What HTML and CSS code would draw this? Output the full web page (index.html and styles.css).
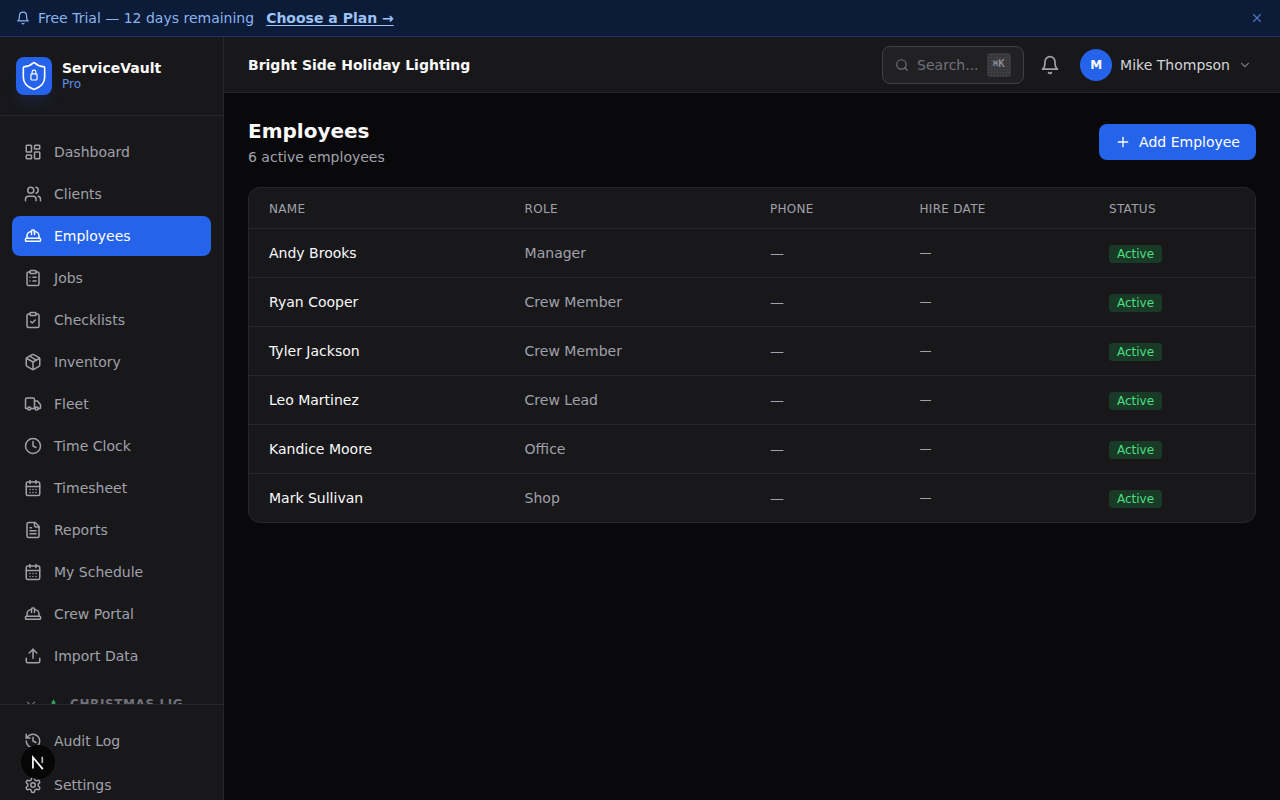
FILE: index.html
```html
<!DOCTYPE html>
<html lang="en">
<head>
<meta charset="utf-8">
<title>Employees</title>
<link rel="stylesheet" href="styles.css">
</head>
<body>
<svg class="defs" width="0" height="0" aria-hidden="true">
  <defs>
    <symbol id="i-dashboard" viewBox="0 0 24 24"><rect x="3" y="3" width="7" height="9" rx="1"/><rect x="14" y="3" width="7" height="5" rx="1"/><rect x="14" y="12" width="7" height="9" rx="1"/><rect x="3" y="16" width="7" height="5" rx="1"/></symbol>
    <symbol id="i-users" viewBox="0 0 24 24"><path d="M16 21v-2a4 4 0 0 0-4-4H6a4 4 0 0 0-4 4v2"/><circle cx="9" cy="7" r="4"/><path d="M22 21v-2a4 4 0 0 0-3-3.87"/><path d="M16 3.13a4 4 0 0 1 0 7.75"/></symbol>
    <symbol id="i-hat" viewBox="0 0 24 24"><path d="M2 18a1 1 0 0 0 1 1h18a1 1 0 0 0 1-1v-2a1 1 0 0 0-1-1H3a1 1 0 0 0-1 1v2z"/><path d="M10 10V5a1 1 0 0 1 1-1h2a1 1 0 0 1 1 1v5"/><path d="M4 15v-3a6 6 0 0 1 6-6"/><path d="M14 6a6 6 0 0 1 6 6v3"/></symbol>
    <symbol id="i-clip-list" viewBox="0 0 24 24"><rect x="8" y="2" width="8" height="4" rx="1"/><path d="M16 4h2a2 2 0 0 1 2 2v14a2 2 0 0 1-2 2H6a2 2 0 0 1-2-2V6a2 2 0 0 1 2-2h2"/><path d="M12 11h4"/><path d="M12 16h4"/><path d="M8 11h.01"/><path d="M8 16h.01"/></symbol>
    <symbol id="i-clip-check" viewBox="0 0 24 24"><rect x="8" y="2" width="8" height="4" rx="1"/><path d="M16 4h2a2 2 0 0 1 2 2v14a2 2 0 0 1-2 2H6a2 2 0 0 1-2-2V6a2 2 0 0 1 2-2h2"/><path d="m9 14 2 2 4-4"/></symbol>
    <symbol id="i-package" viewBox="0 0 24 24"><path d="M11 21.73a2 2 0 0 0 2 0l7-4A2 2 0 0 0 21 16V8a2 2 0 0 0-1-1.73l-7-4a2 2 0 0 0-2 0l-7 4A2 2 0 0 0 3 8v8a2 2 0 0 0 1 1.73z"/><path d="M12 22V12"/><path d="M3.3 7 12 12l8.7-5"/><path d="m7.5 4.27 9 5.15"/></symbol>
    <symbol id="i-truck" viewBox="0 0 24 24"><path d="M14 18V6a2 2 0 0 0-2-2H4a2 2 0 0 0-2 2v11a1 1 0 0 0 1 1h2"/><path d="M15 18H9"/><path d="M19 18h2a1 1 0 0 0 1-1v-3.65a1 1 0 0 0-.22-.624l-3.48-4.35A1 1 0 0 0 17.52 8H14"/><circle cx="17" cy="18" r="2"/><circle cx="7" cy="18" r="2"/></symbol>
    <symbol id="i-clock" viewBox="0 0 24 24"><circle cx="12" cy="12" r="10"/><polyline points="12 6 12 12 16 14"/></symbol>
    <symbol id="i-calendar" viewBox="0 0 24 24"><path d="M8 2v4"/><path d="M16 2v4"/><rect x="3" y="4" width="18" height="18" rx="2"/><path d="M3 10h18"/><path d="M8 14h.01"/><path d="M12 14h.01"/><path d="M16 14h.01"/><path d="M8 18h.01"/><path d="M12 18h.01"/><path d="M16 18h.01"/></symbol>
    <symbol id="i-file" viewBox="0 0 24 24"><path d="M15 2H6a2 2 0 0 0-2 2v16a2 2 0 0 0 2 2h12a2 2 0 0 0 2-2V7Z"/><path d="M14 2v4a2 2 0 0 0 2 2h4"/><path d="M10 9H8"/><path d="M16 13H8"/><path d="M16 17H8"/></symbol>
    <symbol id="i-upload" viewBox="0 0 24 24"><path d="M21 15v4a2 2 0 0 1-2 2H5a2 2 0 0 1-2-2v-4"/><polyline points="17 8 12 3 7 8"/><line x1="12" y1="3" x2="12" y2="15"/></symbol>
    <symbol id="i-history" viewBox="0 0 24 24"><path d="M3 12a9 9 0 1 0 9-9 9.75 9.75 0 0 0-6.74 2.74L3 8"/><path d="M3 3v5h5"/><path d="M12 7v5l4 2"/></symbol>
    <symbol id="i-settings" viewBox="0 0 24 24"><path d="M12.22 2h-.44a2 2 0 0 0-2 2v.18a2 2 0 0 1-1 1.73l-.43.25a2 2 0 0 1-2 0l-.15-.08a2 2 0 0 0-2.73.73l-.22.38a2 2 0 0 0 .73 2.73l.15.1a2 2 0 0 1 1 1.72v.51a2 2 0 0 1-1 1.74l-.15.09a2 2 0 0 0-.73 2.73l.22.38a2 2 0 0 0 2.73.73l.15-.08a2 2 0 0 1 2 0l.43.25a2 2 0 0 1 1 1.73V20a2 2 0 0 0 2 2h.44a2 2 0 0 0 2-2v-.18a2 2 0 0 1 1-1.73l.43-.25a2 2 0 0 1 2 0l.15.08a2 2 0 0 0 2.73-.73l.22-.39a2 2 0 0 0-.73-2.73l-.15-.08a2 2 0 0 1-1-1.74v-.5a2 2 0 0 1 1-1.74l.15-.09a2 2 0 0 0 .73-2.73l-.22-.38a2 2 0 0 0-2.73-.73l-.15.08a2 2 0 0 1-2 0l-.43-.25a2 2 0 0 1-1-1.73V4a2 2 0 0 0-2-2z"/><circle cx="12" cy="12" r="3"/></symbol>
    <symbol id="i-bell" viewBox="0 0 24 24"><path d="M6 8a6 6 0 0 1 12 0c0 7 3 9 3 9H3s3-2 3-9"/><path d="M10.3 21a1.94 1.94 0 0 0 3.4 0"/></symbol>
    <symbol id="i-chevron" viewBox="0 0 24 24"><path d="m6 9 6 6 6-6"/></symbol>
    <symbol id="i-search" viewBox="0 0 24 24"><circle cx="11" cy="11" r="8"/><path d="m21 21-4.300-4.300"/></symbol>
  </defs>
</svg>

<div class="banner">
  <div class="banner-left">
    <svg class="ic ic-14"><use href="#i-bell"/></svg>
    <span class="banner-text">Free Trial — 12 days remaining</span>
    <a class="banner-link" href="#">Choose a Plan →</a>
  </div>
  <svg class="ic ic-14 banner-close" viewBox="0 0 24 24"><path d="M18 6 6 18"/><path d="m6 6 12 12"/></svg>
</div>

<div class="app">
  <aside class="sidebar">
    <div class="brand">
      <div class="logo">
        <svg class="logo-svg" viewBox="0 0 24 24"><path d="M20 13c0 5-3.500 7.500-7.660 8.950a1 1 0 0 1-.67-.01C7.500 20.500 4 18 4 13V6a1 1 0 0 1 1-1c2 0 4.500-1.200 6.240-2.720a1.170 1.170 0 0 1 1.520 0C14.510 3.810 17 5 19 5a1 1 0 0 1 1 1z"/><rect class="logo-lock" x="9.700" y="10.400" width="4.600" height="4.600" rx=".7"/><path class="logo-lock" d="M10.600 10.400V9a1.400 1.400 0 0 1 2.800 0v1.400"/></svg>
      </div>
      <div class="brand-text">
        <div class="brand-name">ServiceVault</div>
        <div class="brand-plan">Pro</div>
      </div>
    </div>
    <nav class="nav">
      <a class="nav-item"><svg class="ic ic-18"><use href="#i-dashboard"/></svg>Dashboard</a>
      <a class="nav-item"><svg class="ic ic-18"><use href="#i-users"/></svg>Clients</a>
      <a class="nav-item is-active"><svg class="ic ic-18"><use href="#i-hat"/></svg>Employees</a>
      <a class="nav-item"><svg class="ic ic-18"><use href="#i-clip-list"/></svg>Jobs</a>
      <a class="nav-item"><svg class="ic ic-18"><use href="#i-clip-check"/></svg>Checklists</a>
      <a class="nav-item"><svg class="ic ic-18"><use href="#i-package"/></svg>Inventory</a>
      <a class="nav-item"><svg class="ic ic-18"><use href="#i-truck"/></svg>Fleet</a>
      <a class="nav-item"><svg class="ic ic-18"><use href="#i-clock"/></svg>Time Clock</a>
      <a class="nav-item"><svg class="ic ic-18"><use href="#i-calendar"/></svg>Timesheet</a>
      <a class="nav-item"><svg class="ic ic-18"><use href="#i-file"/></svg>Reports</a>
      <a class="nav-item"><svg class="ic ic-18"><use href="#i-calendar"/></svg>My Schedule</a>
      <a class="nav-item"><svg class="ic ic-18"><use href="#i-hat"/></svg>Crew Portal</a>
      <a class="nav-item"><svg class="ic ic-18"><use href="#i-upload"/></svg>Import Data</a>
      <div class="nav-group">
        <svg class="ic ic-14"><use href="#i-chevron"/></svg>
        <svg class="tree" viewBox="0 0 12 14"><path d="M6 0 9 5H8l2.500 4H1.500L4 5H3z"/></svg>
        <span class="nav-group-label">CHRISTMAS LIG</span>
      </div>
    </nav>
    <div class="side-foot">
      <a class="nav-item"><svg class="ic ic-18"><use href="#i-history"/></svg>Audit Log</a>
      <a class="nav-item"><svg class="ic ic-18"><use href="#i-settings"/></svg>Settings</a>
    </div>
    <div class="next-badge">
      <svg viewBox="0 0 16 16" class="next-svg"><path class="next-a" d="M3.500 13.800V3.800L12.300 14.300"/><path class="next-b" d="M11.800 3.400V9"/></svg>
    </div>
  </aside>

  <div class="main">
    <header class="topbar">
      <div class="company">Bright Side Holiday Lighting</div>
      <div class="top-right">
        <div class="search">
          <svg class="ic ic-14"><use href="#i-search"/></svg>
          <span class="search-text">Search...</span>
          <kbd class="kbd">⌘K</kbd>
        </div>
        <svg class="ic bell"><use href="#i-bell"/></svg>
        <div class="user">
          <span class="avatar">M</span>
          <span class="user-name">Mike Thompson</span>
          <svg class="ic ic-14 user-chev"><use href="#i-chevron"/></svg>
        </div>
      </div>
    </header>

    <main class="content">
      <div class="page-head">
        <div>
          <h1 class="title">Employees</h1>
          <p class="subtitle">6 active employees</p>
        </div>
        <button class="add-btn">
          <svg class="ic ic-16" viewBox="0 0 24 24"><path d="M5 12h14"/><path d="M12 5v14"/></svg>
          Add Employee
        </button>
      </div>

      <div class="table-card">
        <table class="table">
          <colgroup>
            <col class="c-name"><col class="c-role"><col class="c-phone"><col class="c-hire"><col class="c-status">
          </colgroup>
          <thead>
            <tr><th>Name</th><th>Role</th><th>Phone</th><th>Hire Date</th><th>Status</th></tr>
          </thead>
          <tbody>
            <tr><td class="name">Andy Brooks</td><td>Manager</td><td>—</td><td class="hire">—</td><td><span class="badge">Active</span></td></tr>
            <tr><td class="name">Ryan Cooper</td><td>Crew Member</td><td>—</td><td class="hire">—</td><td><span class="badge">Active</span></td></tr>
            <tr><td class="name">Tyler Jackson</td><td>Crew Member</td><td>—</td><td class="hire">—</td><td><span class="badge">Active</span></td></tr>
            <tr><td class="name">Leo Martinez</td><td>Crew Lead</td><td>—</td><td class="hire">—</td><td><span class="badge">Active</span></td></tr>
            <tr><td class="name">Kandice Moore</td><td>Office</td><td>—</td><td class="hire">—</td><td><span class="badge">Active</span></td></tr>
            <tr><td class="name">Mark Sullivan</td><td>Shop</td><td>—</td><td class="hire">—</td><td><span class="badge">Active</span></td></tr>
          </tbody>
        </table>
      </div>
    </main>
  </div>
</div>
</body>
</html>
```
FILE: styles.css
```css
* { box-sizing: border-box; }
html, body { margin: 0; height: 100%; overflow: hidden; }
body { background: #09090b; color: #fafafa; font-family: "DejaVu Sans", sans-serif; font-size: 14px; display: flex; flex-direction: column; height: 800px; }
.defs { position: absolute; }
.ic { fill: none; stroke: currentColor; stroke-width: 2; stroke-linecap: round; stroke-linejoin: round; flex: none; display: block; }
.ic-14 { width: 14px; height: 14px; }
.ic-16 { width: 16px; height: 16px; }
.ic-18 { width: 18px; height: 18px; }

.banner { height: 37px; flex: none; display: flex; align-items: center; justify-content: space-between; padding: 0 16px; background: #0c1b38; border-bottom: 1px solid #1a3468; color: #8ab4ee; }
.banner-left { display: flex; align-items: center; gap: 8px; }
.banner-link { margin-left: 4px; color: #9cc3f8; font-weight: 700; text-decoration: underline; text-underline-offset: 2px; }
.banner-close { color: #4a78c4; }

.app { flex: 1; display: flex; min-height: 0; }
.sidebar { position: relative; width: 224px; flex: none; display: flex; flex-direction: column; background: #18181b; border-right: 1px solid #27272a; overflow: hidden; }
.brand { height: 79px; flex: none; display: flex; align-items: center; gap: 10px; padding: 0 16px; border-bottom: 1px solid #27272a; }
.logo { width: 36px; height: 38px; border-radius: 8px; background: #2563eb; display: flex; align-items: center; justify-content: center; box-shadow: 0 10px 15px -3px rgba(37, 99, 235, .15); }
.logo-svg { width: 32px; height: 32px; flex: none; fill: none; stroke: #fff; stroke-width: 1.200; stroke-linecap: round; stroke-linejoin: round; }
.logo-lock { stroke-width: .9; }
.brand-name { font-size: 14px; font-weight: 700; line-height: 16px; color: #fafafa; }
.brand-plan { font-size: 12px; line-height: 16px; color: #5b8ee6; }

.nav { flex: 1; min-height: 0; overflow: hidden; padding: 16px 12px; display: flex; flex-direction: column; gap: 2px; }
.nav-item { height: 40px; flex: none; display: flex; align-items: center; gap: 12px; padding: 0 12px; border-radius: 8px; font-size: 14px; color: #a1a1aa; }
.nav-item.is-active { background: #2563eb; color: #fff; }
.nav-group { margin-top: 18px; flex: none; display: flex; align-items: center; height: 16px; padding-left: 12px; color: #71717a; }
.tree { width: 9px; height: 13px; flex: none; fill: #2f9e58; margin-left: 11px; }
.nav-group-label { font-size: 12px; font-weight: 700; letter-spacing: .05em; margin-left: 12px; white-space: nowrap; }
.side-foot { flex: none; padding: 16px 12px 0; border-top: 1px solid #27272a; display: flex; flex-direction: column; gap: 4px; height: 96px; }

.next-badge { position: absolute; left: 21px; top: 708px; width: 34px; height: 34px; border-radius: 50%; background: #060606; display: flex; align-items: center; justify-content: center; }
.next-svg { width: 18px; height: 18px; fill: none; stroke-width: 1.500; }
.next-a { stroke: #fff; }
.next-b { stroke: #bbb; }

.main { flex: 1; min-width: 0; display: flex; flex-direction: column; }
.topbar { height: 56px; flex: none; display: flex; align-items: center; justify-content: space-between; padding: 0 24px; background: #18181b; border-bottom: 1px solid #27272a; }
.company { font-size: 14px; font-weight: 700; color: #fafafa; }
.top-right { display: flex; align-items: center; }
.search { width: 142px; height: 38px; display: flex; align-items: center; gap: 8px; padding: 0 12px; background: #212124; border: 1px solid #3f3f46; border-radius: 8px; color: #71717a; }
.search-text { font-size: 14px; }
.kbd { width: 24px; height: 24px; flex: none; display: flex; align-items: center; justify-content: center; padding-bottom: 2px; border-radius: 4px; background: radial-gradient(circle, #4a4a50 .6px, transparent .8px) 0 0 / 3px 3px, #38383c; color: #a1a1aa; font: 10px "DejaVu Sans Mono", monospace; }
.bell { width: 20px; height: 20px; margin-left: 16px; color: #a1a1aa; }
.user { display: flex; align-items: center; margin-left: 20px; }
.avatar { width: 32px; height: 32px; border-radius: 50%; background: #2563eb; color: #fff; font-size: 12px; font-weight: 700; display: flex; align-items: center; justify-content: center; }
.user-name { margin-left: 8px; font-size: 14px; color: #d4d4d8; }
.user-chev { margin-left: 8px; margin-right: 4px; color: #71717a; }

.content { flex: 1; padding: 24px; }
.page-head { display: flex; align-items: center; justify-content: space-between; margin-bottom: 20px; }
.title { margin: 0; font-size: 20px; line-height: 28px; font-weight: 700; color: #fafafa; }
.subtitle { margin: 2px 0 0; font-size: 14px; line-height: 20px; color: #a1a1aa; }
.add-btn { height: 36px; display: flex; align-items: center; gap: 8px; padding: 0 16px; background: #2563eb; border: 0; border-radius: 8px; color: #fff; font: 14px "DejaVu Sans", sans-serif; }

.table-card { background: #18181b; border: 1px solid #27272a; border-radius: 12px; overflow: hidden; }
.table { width: 100%; border-collapse: separate; border-spacing: 0; table-layout: fixed; }
.c-name { width: 255.600px; }
.c-role { width: 245.400px; }
.c-phone { width: 149.500px; }
.c-hire { width: 189.500px; }
th { height: 41px; padding: 1px 20px 0; text-align: left; font-size: 12px; font-weight: 400; letter-spacing: .3px; text-transform: uppercase; color: #a1a1aa; border-bottom: 1px solid #27272a; }
td { height: 49px; padding: 0 20px; font-size: 14px; color: #a1a1aa; border-bottom: 1px solid #27272a; }
tbody tr:last-child td { border-bottom: 0; height: 48px; }
.name { color: #fafafa; }
.hire { font-size: 12px; }
.badge { display: inline-block; vertical-align: -2px; padding: 1px 8px; border-radius: 4px; background: rgba(34, 197, 94, .2); color: #4ade80; font-size: 12px; line-height: 16px; }
```
